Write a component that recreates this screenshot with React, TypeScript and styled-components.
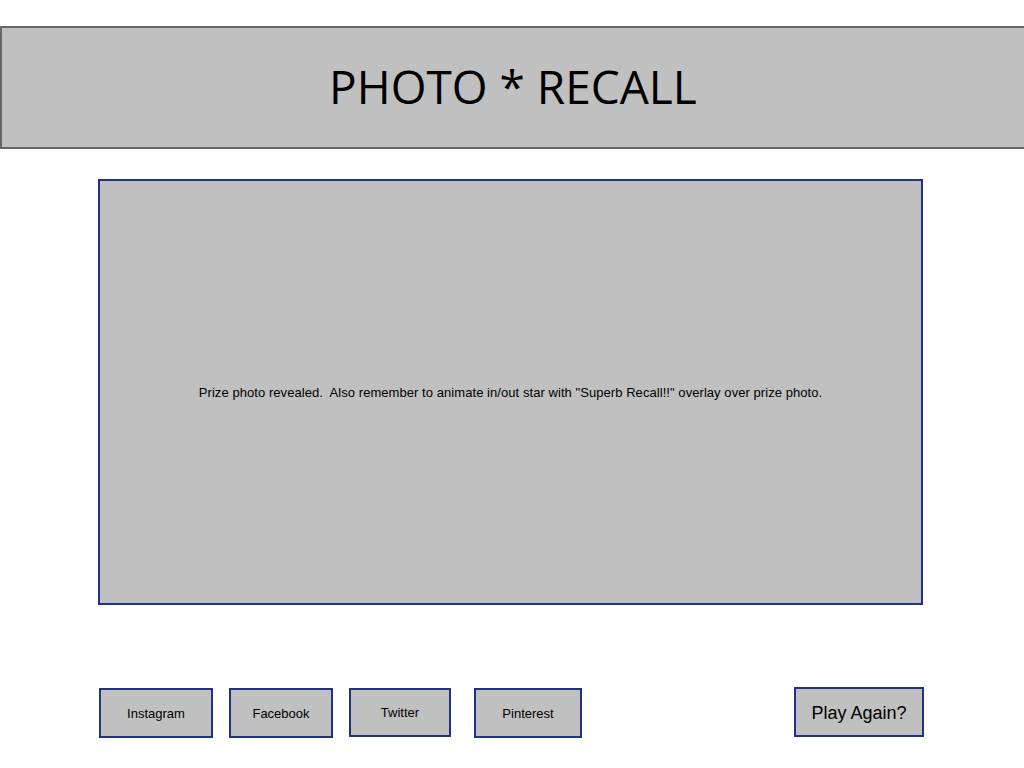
import React from "react";
import styled, { createGlobalStyle } from "styled-components";

const Global = createGlobalStyle`
  html, body { margin: 0; padding: 0; background: #ffffff; overflow: hidden; }
  body { font-family: "Liberation Sans", Arial, sans-serif; }
`;

const Page = styled.div`
  width: 1024px;
  height: 768px;
  display: flex;
  flex-direction: column;
  padding-top: 26px;
  box-sizing: border-box;
`;

const Header = styled.header`
  width: 1030px;
  height: 123px;
  box-sizing: border-box;
  background: #c0c0c0;
  border: 2px solid #666666;
  display: flex;
  align-items: center;
  justify-content: center;
  padding-right: 4px;
`;

const Title = styled.h1`
  margin: 0;
  font-family: "Open Sans", "Noto Sans", sans-serif;
  font-weight: 400;
  font-size: 46px;
  color: #000;
  letter-spacing: 0;
  transform: translateY(-2px);
`;

const PhotoBox = styled.main`
  margin: 30px 0 0 98px;
  width: 825px;
  height: 426px;
  box-sizing: border-box;
  background: #c0c0c0;
  border: 2px solid #1f3383;
  display: flex;
  align-items: center;
  justify-content: center;
`;

const Caption = styled.p`
  margin: 0;
  font-size: 13px;
  letter-spacing: 0.06px;
  color: #000;
  white-space: pre;
`;

const ButtonRow = styled.nav`
  margin: 82px 0 0 99px;
  width: 825px;
  display: flex;
  align-items: flex-start;
`;

const ShareButton = styled.button<{ $w: number; $h?: number; $gap?: number; $dy?: number }>`
  width: ${(p) => p.$w}px;
  height: ${(p) => p.$h ?? 50}px;
  margin-left: ${(p) => p.$gap ?? 0}px;
  margin-top: 1px;
  box-sizing: border-box;
  background: #c0c0c0;
  border: 2px solid #1f3383;
  font-family: "Liberation Sans", Arial, sans-serif;
  font-size: 13px;
  color: #000;
  padding: 0 0 ${(p) => p.$dy ?? 0}px 0;
  display: flex;
  align-items: center;
  justify-content: center;
`;

const PlayButton = styled.button`
  margin-left: auto;
  width: 130px;
  height: 50px;
  box-sizing: border-box;
  background: #c0c0c0;
  border: 2px solid #1f3383;
  font-family: "Liberation Sans", Arial, sans-serif;
  font-size: 18px;
  color: #000;
  padding: 2px 0 0 0;
  display: flex;
  align-items: center;
  justify-content: center;
`;

export default function App() {
  return (
    <>
      <Global />
      <Page>
        <Header>
          <Title>PHOTO * RECALL</Title>
        </Header>
        <PhotoBox>
          <Caption>
            Prize photo revealed.  Also remember to animate in/out star with "Superb Recall!!" overlay over prize photo.
          </Caption>
        </PhotoBox>
        <ButtonRow>
          <ShareButton $w={114}>Instagram</ShareButton>
          <ShareButton $w={104} $gap={16}>Facebook</ShareButton>
          <ShareButton $w={102} $h={49} $gap={16} $dy={1}>Twitter</ShareButton>
          <ShareButton $w={108} $gap={23}>Pinterest</ShareButton>
          <PlayButton>Play Again?</PlayButton>
        </ButtonRow>
      </Page>
    </>
  );
}
